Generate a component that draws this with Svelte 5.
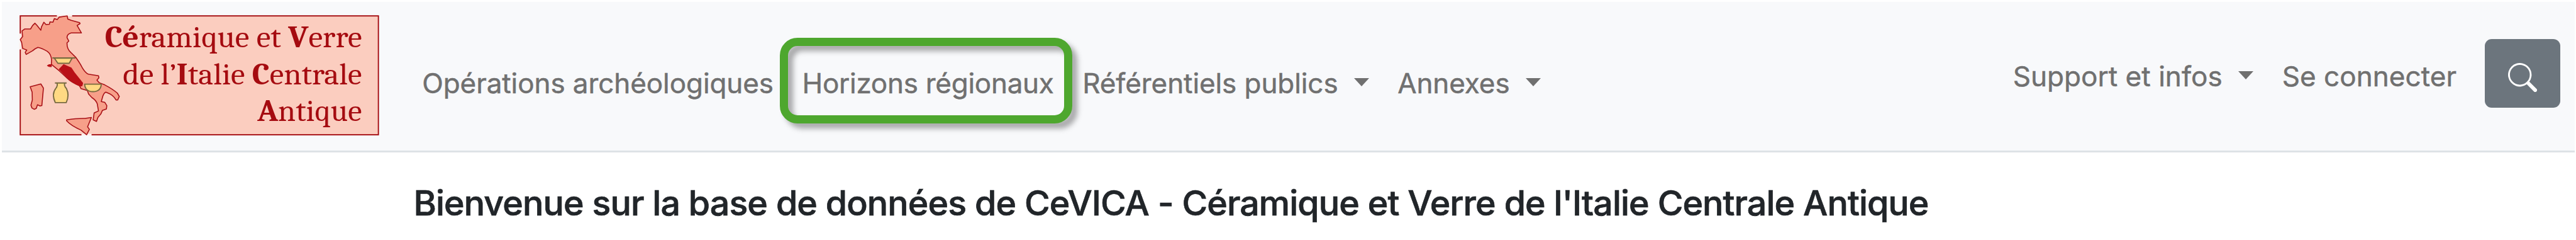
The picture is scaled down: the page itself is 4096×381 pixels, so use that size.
<script>
  const menu = [
    { label: 'Opérations archéologiques', href: '#operations' },
    { label: 'Horizons régionaux', href: '#horizons', highlighted: true },
    { label: 'Référentiels publics', href: '#referentiels', dropdown: true },
    { label: 'Annexes', href: '#annexes', dropdown: true },
  ];
  const account = [
    { label: 'Support et infos', href: '#support', dropdown: true },
    { label: 'Se connecter', href: '#connexion' },
  ];
</script>

{#snippet link(item)}
  <a class="nav-link" class:highlighted={item.highlighted} href={item.href}>
    {item.label}
    {#if item.dropdown}<span class="caret"></span>{/if}
  </a>
{/snippet}

<header class="navbar">
  <a class="brand" href="#accueil" aria-label="CeVICA">
    <svg class="logo" viewBox="36 29 1824 612">
      <rect class="frame" x="43" y="36" width="1808" height="599" />
      <!-- gaps in the frame where the map touches it -->
      <path class="gap" d="M228 35H305M43 125V205M352 635H403" />
      <path
        class="land"
        d="M280 36L283 52L300 58L343 70L345 75L330 84L352 122L300 122Q280 127 279 145L288 163L279 172Q278 205 300 222L325 247Q345 275 355 295Q370 322 387 330L438 338L440 348L430 360L442 373L470 384Q510 405 533 425L543 442L535 460L527 460Q515 440 497 430L475 420Q465 425 460 440L452 468L470 472L480 488L478 505L458 512L450 530L435 548L428 568L411 560L416 525L438 515L432 480Q425 460 405 448L388 430L382 412L350 403L342 388Q300 370 280 350L240 313L200 280L201 260Q200 230 180 215Q150 198 132 195Q115 202 105 212L73 230L68 220L76 208L55 200L50 170L43 155L55 140L52 112L65 102L95 102L105 85L117 73L126 82L147 108L150 92L162 68L173 80L190 78L193 66L208 68L215 50L230 54L240 42Z"
      />
      <path class="land" d="M93 393L147 379L160 400L152 488L143 490L130 484L124 502L114 507L102 500L97 486L104 460L103 420Z" />
      <path class="land" d="M277 560Q330 552 370 553L402 548L383 595L392 608L378 635L350 612Q300 590 277 565Z" />
      <path class="zone" d="M240 305L262 282L300 298L318 325L358 375L355 388L345 390Q305 370 290 355ZM180 287L188 282H200V292L188 291Z" />
      <path class="vase" d="M215 249L233 275H290L305 249ZM205 248H322" />
      <path class="vase" d="M228 374Q234 388 222 402Q200 430 220 473H275Q293 435 276 402Q262 388 268 374ZM218 374H277" />
      <path class="vase" d="M368 380H452Q450 418 410 418Q370 418 368 380Z" />
      <text x="470" y="193" textLength="1298" lengthAdjust="spacingAndGlyphs"><tspan>Cé</tspan>ramique et <tspan>V</tspan>erre</text>
      <text x="561" y="381" textLength="1207" lengthAdjust="spacingAndGlyphs">de l’<tspan>I</tspan>talie <tspan>C</tspan>entrale</text>
      <text x="1240" y="567" textLength="528" lengthAdjust="spacingAndGlyphs"><tspan>A</tspan>ntique</text>
    </svg>
  </a>
  <nav class="menu">
    {#each menu as item (item.label)}
      {@render link(item)}
    {/each}
  </nav>
  <nav class="account">
    {#each account as item (item.label)}
      {@render link(item)}
    {/each}
  </nav>
  <button class="search" aria-label="Rechercher">
    <svg viewBox="0 0 16 16" fill="currentColor">
      <path d="M11.742 10.344a6.5 6.5 0 1 0-1.397 1.398h-.001c.03.04.062.078.098.115l3.85 3.85a1 1 0 0 0 1.415-1.414l-3.85-3.85a1.007 1.007 0 0 0-.115-.1zM12 6.5a5.5 5.5 0 1 1-11 0 5.5 5.5 0 0 1 11 0z" />
    </svg>
  </button>
</header>
<main>
  <h1>Bienvenue sur la base de données de CeVICA - Céramique et Verre de l'Italie Centrale Antique</h1>
</main>

<style>
  :global(body) {
    margin: 0;
    background: #fff;
    font-family: Inter, "Liberation Sans", sans-serif;
  }
  .navbar {
    box-sizing: border-box;
    display: flex;
    align-items: flex-start;
    height: 238.5px;
    margin: 3px 2px 0 3px;
    padding: 20.3px 22.7px 0 27.2px;
    background: #f8f9fb;
    border-bottom: 3.5px solid #dee2e6;
    isolation: isolate;
  }
  .brand, .logo {
    display: block;
    flex: none;
  }
  .logo {
    width: 574.5px;
    height: 192.8px;
  }
  .frame {
    fill: #fbcdbf;
    stroke: #a50b10;
    stroke-width: 6;
  }
  .gap {
    fill: none;
    stroke: #fcf0ed;
    stroke-width: 10;
  }
  .land {
    fill: #f79f89;
    stroke: #a81016;
    stroke-width: 5;
    stroke-linejoin: round;
  }
  .zone {
    fill: #b91017;
    stroke: #b91017;
    stroke-width: 4;
    stroke-linejoin: round;
  }
  .vase {
    fill: #ffd983;
    stroke: #786a40;
    stroke-width: 6;
    stroke-linejoin: round;
  }
  .logo text {
    font: 153px Cambria, Caladea, "Liberation Serif", serif;
    fill: #a50b10;
  }
  .logo tspan {
    font-weight: bold;
  }
  .menu, .account {
    display: flex;
    gap: 46px;
    font-size: 44px;
    line-height: 66px;
    letter-spacing: -.08px;
    white-space: nowrap;
    -webkit-text-stroke: .5px;
  }
  .menu {
    gap: 45.6px;
    margin: 75.7px 0 0 66.5px;
  }
  .account {
    margin: 64.7px 45px 0 auto;
    letter-spacing: .05px;
  }
  .nav-link {
    position: relative;
    display: flex;
    align-items: center;
    color: #707070;
    text-decoration: none;
  }
  .caret {
    margin: 0 0 3px 25px;
    border: 12.3px solid transparent;
    border-top: 13px solid #707070;
    border-bottom: 0;
  }
  .highlighted {
    letter-spacing: -.27px;
  }
  .highlighted::before {
    content: '';
    position: absolute;
    z-index: -1;
    box-sizing: border-box;
    top: -38.5px;
    left: -35.5px;
    width: 464.8px;
    height: 135.8px;
    border: 13.2px solid #4ea72e;
    border-radius: 28px;
    filter: drop-shadow(8px 8px 4px rgba(0, 0, 0, .33));
  }
  .search {
    display: flex;
    align-items: center;
    justify-content: center;
    width: 120.3px;
    height: 109px;
    margin-top: 39.1px;
    padding: 12px 0 0;
    border: 0;
    border-radius: 11px;
    background: #6c757d;
    color: #fff;
  }
  .search svg {
    width: 46px;
    height: 46px;
  }
  h1 {
    margin: 47.5px 0 0 657.5px;
    color: #212529;
    font-size: 55.5px;
    font-weight: 500;
    line-height: 66px;
    letter-spacing: -.92px;
    white-space: nowrap;
    -webkit-text-stroke: .7px;
  }
</style>
